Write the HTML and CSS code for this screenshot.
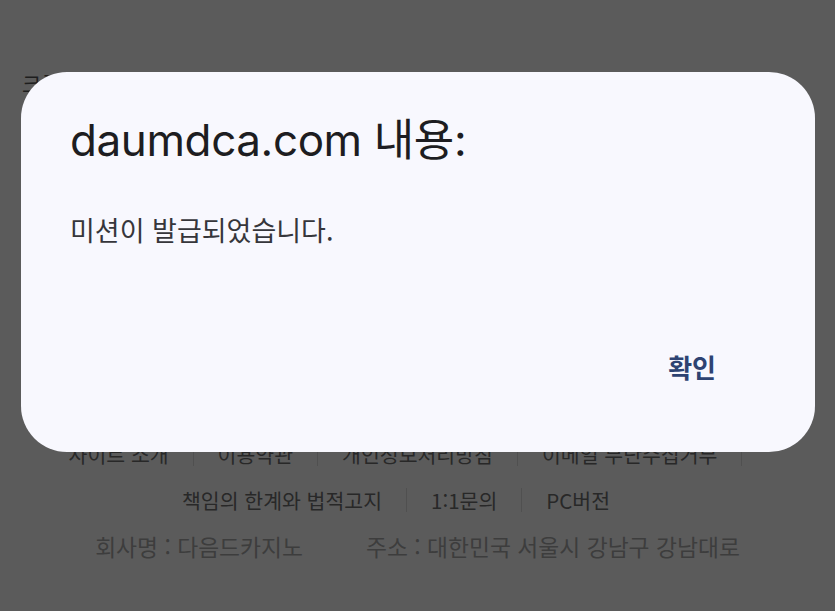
FILE: index.html
```html
<!DOCTYPE html>
<html lang="ko">
<head>
<meta charset="utf-8">
<title>daumdca.com</title>
<link rel="stylesheet" href="styles.css">
</head>
<body>
<div class="page">
  <div class="page-head">크롬 알림</div>
  <footer class="site-footer">
    <nav class="links links-1">
      <a class="link">사이트 소개</a>
      <a class="link">이용약관</a>
      <a class="link">개인정보처리방침</a>
      <a class="link">이메일 무단수집거부</a>
    </nav>
    <nav class="links links-2">
      <a class="link">책임의 한계와 법적고지</a>
      <a class="link">1:1문의</a>
      <a class="link link-last">PC버전</a>
    </nav>
    <div class="company">
      <span>회사명 : 다음드카지노</span>
      <span>주소 : 대한민국 서울시 강남구 강남대로</span>
    </div>
  </footer>
</div>

<div class="dialog" role="alertdialog">
  <h1 class="dialog-title">daumdca.com 내용:</h1>
  <p class="dialog-message">미션이 발급되었습니다.</p>
  <div class="dialog-actions">
    <button class="dialog-btn" type="button">확인</button>
  </div>
</div>
</body>
</html>
```

FILE: styles.css
```css
* { box-sizing: border-box; }

html, body {
  margin: 0;
  padding: 0;
  height: 100%;
}

body {
  background: #5b5b5b;
  font-family: "Noto Sans CJK KR", "Noto Sans", sans-serif;
  overflow: hidden;
}

.page {
  width: 835px;
  height: 611px;
}

.page-head {
  padding: 70px 0 0 22px;
  font-size: 21px;
  line-height: 26px;
  color: #1e1e1e;
  white-space: nowrap;
}

.site-footer {
  margin-top: 335px;
  color: #282828;
}

.links {
  display: flex;
  justify-content: center;
  align-items: center;
  height: 46px;
  font-size: 20.5px;
  white-space: nowrap;
}

.links-2 {
  padding-left: 6px;
}

.link {
  display: flex;
  align-items: center;
  color: inherit;
  text-decoration: none;
}

.link::after {
  content: "";
  display: block;
  width: 1px;
  height: 24px;
  margin: 0 24px;
  background: #505050;
}

.link-last::after {
  visibility: hidden;
}

.company {
  display: flex;
  justify-content: center;
  gap: 63px;
  height: 46px;
  align-items: center;
  font-size: 22.8px;
  color: #3d3d3d;
  white-space: nowrap;
}

/* Dialog overlay */
.dialog {
  position: fixed;
  left: 21px;
  top: 72px;
  width: 794px;
  height: 380px;
  background: #f8f8fe;
  border-radius: 46px;
  padding: 44px 49px 0 49px;
}

.dialog-title {
  margin: 0;
  font-family: Inter, "Noto Sans CJK KR", sans-serif;
  font-weight: 400;
  font-size: 44px;
  line-height: 48px;
  color: #1d1d21;
  letter-spacing: -0.4px;
}

.dialog-message {
  margin: 48px 0 0;
  font-size: 27px;
  line-height: 36px;
  color: #36363b;
}

.dialog-actions {
  display: flex;
  justify-content: flex-end;
  margin-top: 101px;
  padding-right: 50px;
}

.dialog-btn {
  border: 0;
  background: none;
  padding: 0;
  font-family: "Noto Sans CJK KR", sans-serif;
  font-weight: 700;
  font-size: 26px;
  line-height: 36px;
  color: #2d4372;
  cursor: pointer;
}
```
